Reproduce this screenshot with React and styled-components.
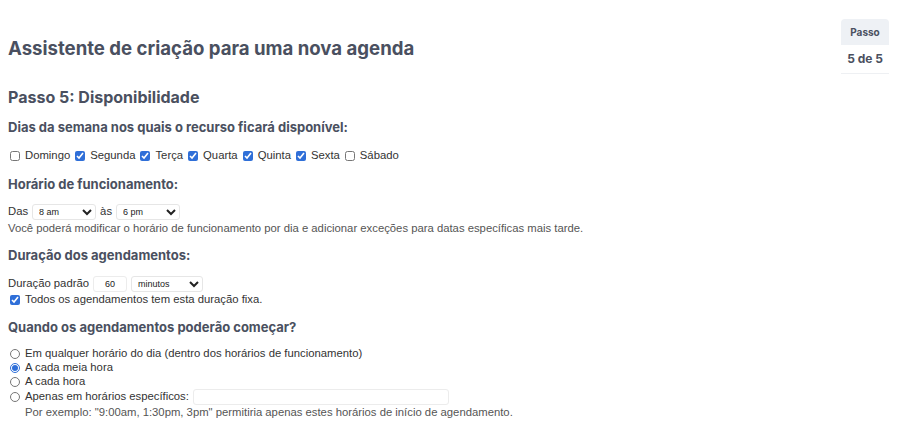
import React from 'react';
import styled, { createGlobalStyle } from 'styled-components';

const Global = createGlobalStyle`
  body {
    margin: 0;
    background: #fff;
    font-family: "Liberation Sans", Arial, sans-serif;
    color: #333;
  }
`;

const Page = styled.div`
  display: flex;
  justify-content: space-between;
  align-items: flex-start;
  padding: 19px 11px 0 8px;
`;

const Main = styled.div`
  display: flex;
  flex-direction: column;
`;

const Title = styled.h1`
  font-family: Inter, "Noto Sans", sans-serif;
  font-weight: 700;
  font-size: 18.6px;
  color: #4a5060;
  margin: 18px 0 0;
  line-height: 22px;
`;

const StepTitle = styled.h2`
  font-family: Inter, "Noto Sans", sans-serif;
  font-weight: 700;
  font-size: 16px;
  color: #4a5060;
  margin: 28px 0 0;
  line-height: 20px;
`;

const Label = styled.h3`
  font-family: Inter, "Noto Sans", sans-serif;
  font-weight: 700;
  font-size: 13px;
  color: #4a5060;
  margin: ${(p) => p.$top || 12}px 0 0;
  line-height: 16px;
`;

const Row = styled.div`
  display: flex;
  align-items: center;
  gap: ${(p) => p.$gap || 4}px;
  margin-top: ${(p) => p.$top || 0}px;
  font-size: 11.3px;
  line-height: 13.7px;
  padding-left: ${(p) => p.$indent || 0}px;
`;

const Item = styled.label`
  display: flex;
  align-items: center;
  gap: 5px;
`;

const Box = styled.input`
  margin: 0;
  width: 10px;
  height: 10px;
  accent-color: #2f6fd8;
`;

const Select = styled.select`
  font-family: "Liberation Sans", Arial, sans-serif;
  font-size: 9px;
  height: 16px;
  width: ${(p) => p.$w}px;
  border: 1px solid #e6e6e6;
  border-radius: 3px;
  background: #fff;
  padding: 0 2px;
  color: #222;
`;

const NumberInput = styled.input`
  font-family: "Liberation Sans", Arial, sans-serif;
  font-size: 9px;
  height: 16px;
  width: 34px;
  box-sizing: border-box;
  text-align: center;
  border: 1px solid #ececec;
  border-radius: 3px;
  color: #222;
`;

const TextInput = styled.input`
  width: 256px;
  height: 16px;
  box-sizing: border-box;
  border: 1px solid #ececec;
  border-radius: 3px;
`;

const Help = styled.div`
  font-size: 11.3px;
  line-height: 14px;
  color: #555;
  margin-top: ${(p) => p.$top || 0}px;
  padding-left: ${(p) => p.$indent || 0}px;
`;

const Side = styled.div`
  display: flex;
  flex-direction: column;
  align-items: center;
  width: 48px;
  font-family: Inter, "Noto Sans", sans-serif;
  font-weight: 700;
  color: #4a5060;
`;

const SideHead = styled.div`
  width: 100%;
  text-align: center;
  background: #eef1f5;
  border-radius: 4px 4px 0 0;
  font-size: 10px;
  line-height: 26px;
`;

const SideValue = styled.div`
  width: 100%;
  text-align: center;
  font-size: 12px;
  line-height: 28px;
  border-bottom: 1px solid #eef0f3;
`;

const days = [
  ['Domingo', false],
  ['Segunda', true],
  ['Terça', true],
  ['Quarta', true],
  ['Quinta', true],
  ['Sexta', true],
  ['Sábado', false],
];

export default function App() {
  return (
    <>
      <Global />
      <Page>
        <Main>
          <Title>Assistente de criação para uma nova agenda</Title>
          <StepTitle>Passo 5: Disponibilidade</StepTitle>

          <Label $top={12}>Dias da semana nos quais o recurso ficará disponível:</Label>
          <Row $top={14} $gap={5} $indent={2}>
            {days.map(([d, on]) => (
              <Item key={d}>
                <Box type="checkbox" defaultChecked={on} />
                {d}
              </Item>
            ))}
          </Row>

          <Label $top={13}>Horário de funcionamento:</Label>
          <Row $top={12}>
            Das
            <Select $w={64} defaultValue="8am">
              <option value="8am">8 am</option>
            </Select>
            às
            <Select $w={64} defaultValue="6pm">
              <option value="6pm">6 pm</option>
            </Select>
          </Row>
          <Help $top={1}>Você poderá modificar o horário de funcionamento por dia e adicionar exceções para datas específicas mais tarde.</Help>

          <Label $top={12}>Duração dos agendamentos:</Label>
          <Row $top={13}>
            Duração padrão
            <NumberInput type="text" defaultValue="60" />
            <Select $w={72} defaultValue="min">
              <option value="min">minutos</option>
            </Select>
          </Row>
          <Row $indent={2} $top={1}>
            <Item>
              <Box type="checkbox" defaultChecked />
              Todos os agendamentos tem esta duração fixa.
            </Item>
          </Row>

          <Label $top={13}>Quando os agendamentos poderão começar?</Label>
          <Row $top={12} $indent={2}>
            <Item>
              <Box type="radio" name="start" />
              Em qualquer horário do dia (dentro dos horários de funcionamento)
            </Item>
          </Row>
          <Row $indent={2}>
            <Item>
              <Box type="radio" name="start" defaultChecked />
              A cada meia hora
            </Item>
          </Row>
          <Row $indent={2}>
            <Item>
              <Box type="radio" name="start" />
              A cada hora
            </Item>
          </Row>
          <Row $indent={2}>
            <Item>
              <Box type="radio" name="start" />
              Apenas em horários específicos:
            </Item>
            <TextInput type="text" />
          </Row>
          <Help $indent={17}>Por exemplo: "9:00am, 1:30pm, 3pm" permitiria apenas estes horários de início de agendamento.</Help>
        </Main>
        <Side>
          <SideHead>Passo</SideHead>
          <SideValue>5 de 5</SideValue>
        </Side>
      </Page>
    </>
  );
}
